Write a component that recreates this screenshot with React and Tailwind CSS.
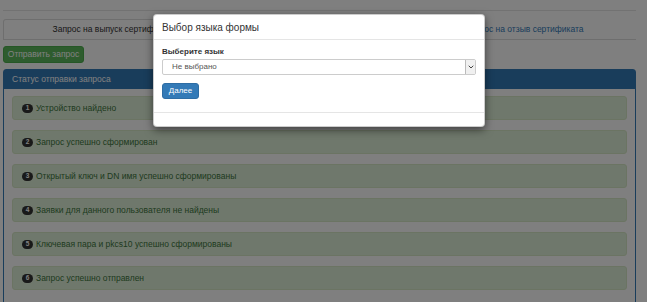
import { ChevronDown } from 'lucide-react'

const steps = [
    'Устройство найдено',
    'Запрос успешно сформирован',
    'Открытый ключ и DN имя успешно сформированы',
    'Заявки для данного пользователя не найдены',
    'Ключевая пара и pkcs10 успешно сформированы',
    'Запрос успешно отправлен'
]

export default function App() {
    return (
        <div className="relative h-[302px] w-[647px] overflow-hidden bg-white font-['Liberation_Sans',Arial,sans-serif] text-[8.5px] text-[#333]">
            {/* page */}
            <div className="pl-[3px] pr-[11px] pt-[10px]">
                <div className="border-t border-[#e5e5e5]" />
                <div className="mt-[8px] flex border-b border-[#ddd]">
                    <div className="flex h-[20px] w-[222px] items-center justify-center rounded-t-[3px] border border-b-0 border-[#ddd]">
                        Запрос на выпуск сертификата
                    </div>
                    <div className="ml-[240px] flex h-[20px] items-center text-[#337ab7]">
                        Запрос на отзыв сертификата
                    </div>
                </div>

                <button className="mt-[6px] flex h-[17px] w-[81px] items-center justify-center rounded-[3px] border border-[#4cae4c] bg-[#5cb85c] text-[8.5px] text-white">
                    Отправить запрос
                </button>

                <div className="mt-[6px] rounded-t-[3px] border border-[#337ab7]">
                    <div className="flex h-[19px] items-center bg-[#337ab7] px-[8px] text-white">Статус отправки запроса</div>
                    <div className="flex flex-col gap-[10px] px-[8px] pb-[20px] pt-[7px]">
                        {steps.map((s, i) => (
                            <div
                                key={i}
                                className="flex h-[24px] items-center gap-[3px] rounded-[3px] border border-[#d6e9c6] bg-[#dff0d8] px-[9px] text-[#3c763d]"
                            >
                                <span className="flex h-[9px] w-[11px] items-center justify-center rounded-full bg-[#333] text-[6.5px] font-bold leading-none text-white">
                                    {i + 1}
                                </span>
                                {s}
                            </div>
                        ))}
                    </div>
                </div>
            </div>

            {/* backdrop */}
            <div className="absolute inset-0 bg-black/50" />

            {/* modal */}
            <div className="absolute left-[153px] top-[14px] w-[332px] rounded-[4px] border border-black/20 bg-white shadow-[0_3px_9px_rgba(0,0,0,0.5)]">
                <div className="flex h-[25px] items-center border-b border-[#e5e5e5] px-[8px] text-[10px] text-[#333]">
                    Выбор языка формы
                </div>
                <div className="px-[8px] pb-[13px] pt-[6px]">
                    <div className="text-[8px] leading-[11px] font-bold text-[#333]">Выберите язык</div>
                    <div className="mt-[2px] flex h-[16px] items-center rounded-[2px] border border-[#ccc] bg-white pl-[9px] text-[8px] text-[#555]">
                        <span className="flex-1">Не выбрано</span>
                        <span className="flex h-full w-[10px] items-center justify-center border-l border-[#bbb] bg-[#f0f0f0]">
                            <ChevronDown size={8} strokeWidth={3} className="text-[#444]" />
                        </span>
                    </div>
                    <button className="mt-[8px] flex h-[16px] w-[37px] items-center justify-center rounded-[3px] border border-[#2e6da4] bg-[#337ab7] text-[8px] text-white">
                        Далее
                    </button>
                </div>
                <div className="h-[14px] border-t border-[#e5e5e5]" />
            </div>
        </div>
    )
}
